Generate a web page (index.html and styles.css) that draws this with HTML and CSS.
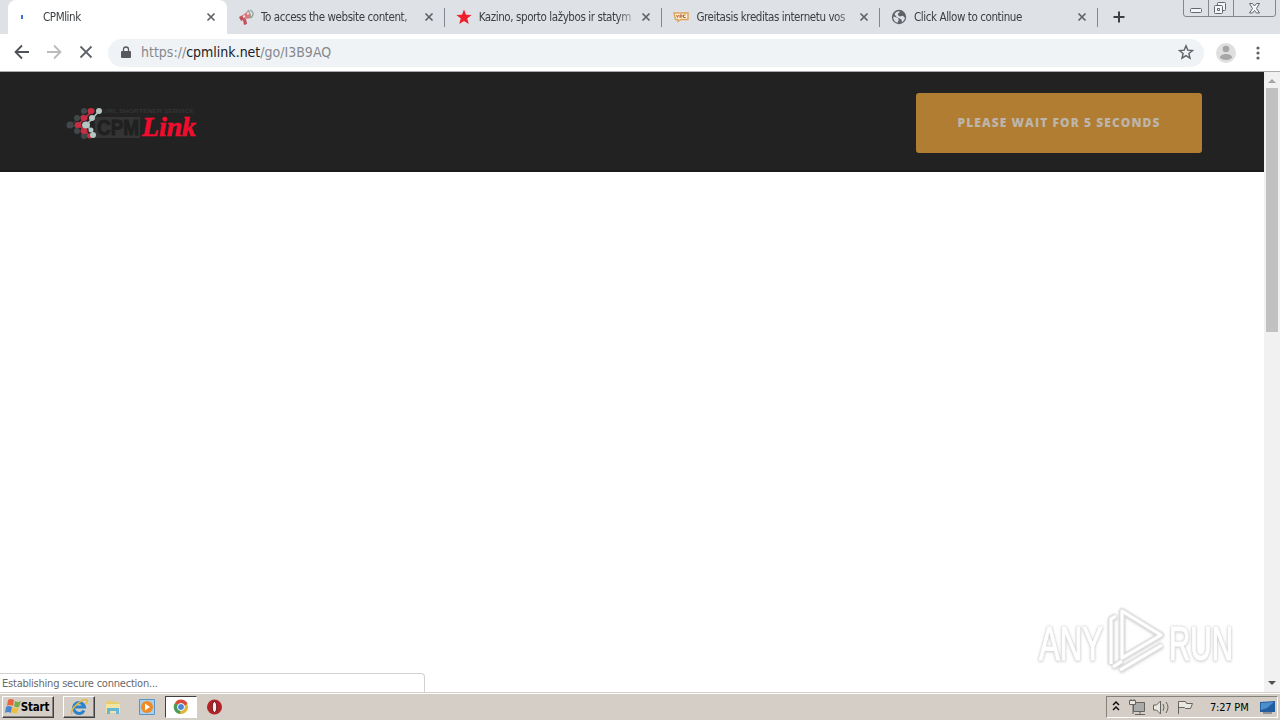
FILE: index.html
```html
<!DOCTYPE html>
<html lang="en">
<head>
    <meta charset="UTF-8">
    <meta name="viewport" content="width=device-width, initial-scale=1.0">
    <title>CPMlink</title>
    <link rel="stylesheet" href="styles.css">
</head>
<body>
    <div class="screen">
        <div class="tabs">
            <div class="tab active">
                <svg class="favicon" viewBox="0 0 16 16"><path d="M7 6h2v4H7z" fill="#3b6fd8"/></svg>
                <span class="tab-title">CPMlink</span>
                <svg class="close" viewBox="0 0 10 10"><path d="M1.5 1.5l7 7M8.5 1.5l-7 7"/></svg>
            </div>
            <div class="tab">
                <svg class="favicon" viewBox="0 0 16 16">
                    <path d="M5 6l6-5 3 8-8 1z" fill="#d9777c"/>
                    <path d="M1 8l4-2 2 4-4 2zM5 11l3-1 1 5-3 1z" fill="#c04f58"/>
                    <path d="M10 1l3 8M12 1c3 1 4 4 2 7" fill="none" stroke="#8ba69c" stroke-width="1.3"/>
                    <path d="M5 8l2-1M9 5l2-1" stroke="#f4dce0" stroke-width="2"/>
                </svg>
                <span class="tab-title">To access the website content,</span>
                <svg class="close" viewBox="0 0 10 10"><path d="M1.5 1.5l7 7M8.5 1.5l-7 7"/></svg>
            </div>
            <div class="tab">
                <svg class="favicon" viewBox="0 0 16 16"><path d="M8 .5l2 5.3 5.6.2-4.4 3.5 1.6 5.5L8 11.9 3.2 15l1.6-5.5L.4 6 6 5.8z" fill="#ef1f2d"/></svg>
                <span class="tab-title">Kazino, sporto lažybos ir statym</span>
                <svg class="close" viewBox="0 0 10 10"><path d="M1.5 1.5l7 7M8.5 1.5l-7 7"/></svg>
            </div>
            <div class="tab">
                <svg class="favicon" viewBox="0 0 16 16"><path d="M1 4h14v6.5H8l-3 2v-2H2.500z" fill="#fff0d9" stroke="#dfa35b" stroke-width="1.4"/><path d="M3.500 6l1 2.500 1-2.500M7 9V6h2v2H7M12.500 6h-2v2.500h2V8" fill="none" stroke="#b9652f"/></svg>
                <span class="tab-title">Greitasis kreditas internetu vos</span>
                <svg class="close" viewBox="0 0 10 10"><path d="M1.5 1.5l7 7M8.5 1.5l-7 7"/></svg>
            </div>
            <div class="tab">
                <svg class="favicon" viewBox="0 0 16 16"><circle cx="8" cy="8" r="7.2" fill="#5f6368"/><path d="M2.3 7.5l4.5 1.2 1 2-1.3 3.1C3.7 13 2 10.8 2.3 7.5zM8 2.2l1 .8-2 1.5v1.7L9 7.5l2.800-.7 2.100 2c-.2 2-1.300 3.500-3 4.400l-.4-2.700-2-1L5 7.500 3.500 5C4.500 3.300 6 2.300 8 2.200z" fill="#dee1e6"/></svg>
                <span class="tab-title">Click Allow to continue</span>
                <svg class="close" viewBox="0 0 10 10"><path d="M1.5 1.5l7 7M8.5 1.5l-7 7"/></svg>
            </div>
            <svg class="new-tab" viewBox="0 0 12 12"><path d="M6 .5v11M.5 6h11" stroke="#3c4043" stroke-width="2"/></svg>
            <svg class="window-buttons" viewBox="0 0 94 18">
                <path d="M.5 0v14q0 2.500 2.500 2.500h87q2.500 0 2.500-2.500V0M25.500 0v16M50.500 0v16" fill="none" stroke="#84888d"/>
                <g fill="#f5f6f8" stroke="#63676e"><rect x="7.5" y="8.5" width="11" height="4" rx="1"/><rect x="34.5" y="2.5" width="8" height="8" rx="1"/><rect x="31.5" y="5.5" width="8" height="8" rx="1"/><path d="M34.500 8.500h2v2h-2zM66.500 3.500h3l2 2.500 2-2.500h3L73.500 8.500l3 4.500h-3l-2-2.500-2 2.500h-3l3-4.500z"/></g>
            </svg>
        </div>

        <div class="toolbar">
            <svg class="nav-icons" viewBox="0 0 108 38" fill="none" stroke-width="1.8">
                <path d="M30 18H17M23 11.5L16.5 18l6.5 6.5" stroke="#4f5357"/><path d="M48 18h13M55 11.5l6.5 6.5-6.5 6.5" stroke="#b9bbbd"/><path d="M81.5 12.5l11 11M92.500 12.500l-11 11" stroke="#5f6368"/>
            </svg>
            <div class="address">
                <svg class="lock" viewBox="0 0 10 13"><path d="M1 5h8q1 0 1 1v5q0 1-1 1H1q-1 0-1-1V6q0-1 1-1z" fill="#55595e"/><path d="M2.5 5V3.5a2.5 2.5 0 015 0V5" fill="none" stroke="#55595e" stroke-width="1.3"/></svg>
                <span class="url">https://<b>cpmlink.net</b>/go/I3B9AQ</span>
                <svg class="bookmark" viewBox="0 0 16 16"><path d="M8 1.8l1.8 4.3 4.7.4-3.6 3 1.1 4.7L8 11.7l-4 2.5 1.1-4.7-3.6-3 4.7-.4z" fill="none" stroke="#5f6368" stroke-width="1.4"/></svg>
            </div>
            <svg class="profile" viewBox="0 0 20 20"><circle cx="10" cy="10" r="10" fill="#dfdfdf"/><circle cx="10" cy="6" r="3.3" fill="#a6a6a6"/><ellipse cx="10" cy="14" rx="6" ry="3" fill="#a6a6a6"/></svg>
            <svg class="more" viewBox="0 0 4 16" fill="#5f6368"><circle cx="2" cy="3" r="1.6"/><circle cx="2" cy="8" r="1.6"/><circle cx="2" cy="13" r="1.6"/></svg>
        </div>

        <div class="viewport">
            <div class="page">
                <div class="header">
                    <svg class="logo" viewBox="0 0 136 36">
                        <g fill="#41484a"><circle cx="19" cy="4" r="3"/><circle cx="12" cy="11" r="3"/><circle cx="5" cy="18" r="3.5"/><circle cx="12" cy="24" r="3"/><circle cx="19" cy="29" r="3"/></g>
                        <g fill="#c82d43"><ellipse cx="26" cy="4" rx="3.5" ry="3"/><ellipse cx="19" cy="11" rx="3.5" ry="3"/><ellipse cx="13" cy="18" rx="3.5" ry="3"/><ellipse cx="19" cy="24" rx="3.5" ry="3"/><ellipse cx="25" cy="29" rx="3" ry="2.5"/></g>
                        <path d="M21 4l-6 6M14 11l-7 6M8 18l7 7" stroke="#41484a"/>
                        <path d="M27 4l-6 6M20 11l-6 6M14 18l6 6 5 5" stroke="#c82d43" stroke-width="1.5"/>
                        <path d="M34 4l-6 7-7 7 6 6" stroke="#b5c5c2" stroke-width="1.5" fill="none"/>
                        <path d="M30 10h45v21H30z" fill="#343434"/>
                        <g fill="#b5c5c2"><ellipse cx="34" cy="4" rx="3" ry="3"/><circle cx="27" cy="11" r="3"/><ellipse cx="21" cy="18" rx="4" ry="3.5"/><circle cx="26" cy="23" r="2.5"/><ellipse cx="28" cy="28" rx="3" ry="3"/></g>
                        <text class="logo-small" x="38" y="6" textLength="91" lengthAdjust="spacingAndGlyphs">URL SHORTENER SERVICE</text>
                        <text class="logo-cpm" x="32" y="28" textLength="42" lengthAdjust="spacingAndGlyphs">CPM</text>
                        <text class="logo-link" x="77" y="29" textLength="54" lengthAdjust="spacingAndGlyphs">Link</text>
                    </svg>
                    <button class="wait">PLEASE WAIT FOR 5 SECONDS</button>
                </div>
            </div>
            <div class="scrollbar">
                <svg viewBox="0 0 16 16"><path d="M4 11l4-4 4 4z" fill="#a3a3a3"/></svg>
                <div class="thumb"></div>
                <svg class="down" viewBox="0 0 16 16"><path d="M4 5l4 4 4-4z" fill="#505050"/></svg>
            </div>
            <div class="status"><span>Establishing secure connection...</span></div>
            <svg class="watermark" viewBox="0 0 250 76">
                <g fill="#fff" stroke="#fff" stroke-width="1.2">
                    <text x="9" y="53" textLength="64" lengthAdjust="spacingAndGlyphs">ANY</text>
                    <text x="139" y="53" textLength="64" lengthAdjust="spacingAndGlyphs">RUN</text>
                </g>
                <g fill="none" stroke-linejoin="round" stroke="#e2e2e2" stroke-width="5">
                    <path d="M86 9l-5 3v45M92 4l39 24-39 23zM83 60l9-6M90 63l42-25"/>
                    <path d="M86 9l-5 3v45M92 4l39 24-39 23zM83 60l9-6M90 63l42-25" stroke="#fff" stroke-width="3"/>
                </g>
            </svg>
        </div>

        <div class="taskbar">
            <div class="start">
                <svg viewBox="0 0 16 16"><path d="M3 1q3-2 6 0L8 7Q5 5 2 7z" fill="#e6653c"/><path d="M10 2q3 2 6 0l-2 6q-3 1-5-1z" fill="#79ad4b"/><path d="M1 8q3-2 6 0l-1 6q-3-2-6 0z" fill="#4b86cc"/><path d="M8 8q3 2 6 0l-2 6q-3 1-6-1z" fill="#eebf3e"/></svg>
                <span>Start</span>
            </div>
            <div class="task raised"><svg viewBox="0 0 20 20"><path d="M15 13.5A5.5 5.5 0 1115.500 10H6" fill="none" stroke="#2c83cc" stroke-width="3"/><path d="M3 17C0 13 14 0 18 3q1 1-1 4" fill="none" stroke="#e3ba3a" stroke-width="1.5"/></svg></div>
            <div class="task"><svg viewBox="0 0 20 20"><path d="M3 5l6-2 1 2h6v4H3z" fill="#e8cc70"/><path d="M3 7h14v9H3z" fill="#f3e4a4"/><path d="M4 17v-6h12v6h-3v-3H7v3z" fill="#65b7d7"/></svg></div>
            <div class="task"><svg viewBox="0 0 20 20"><path d="M2.5 2.5h15v15h-15z" fill="#a9cfec" stroke="#5794c8"/><circle cx="10" cy="10" r="6" fill="#ee8b22"/><path d="M8 6.500l5 3.500-5 3.500z" fill="#fff"/></svg></div>
            <div class="task current"><svg viewBox="0 0 20 20"><circle cx="10" cy="10" r="7" fill="#e2b532"/><path d="M10 10L4 6a7 7 0 0112.500 1z" fill="#d84c3d"/><path d="M10 10L4 6a7 7 0 005 11z" fill="#4a9d59"/><circle cx="10" cy="10" r="3.5" fill="#4d83d9" stroke="#fff"/></svg></div>
            <div class="task"><svg viewBox="0 0 20 20"><circle cx="9.5" cy="10" r="7.5" fill="#b42226"/><ellipse cx="9.5" cy="10" rx="2.3" ry="5.5" fill="#f8eeee" stroke="#651215"/></svg></div>
            <div class="tray">
                <svg viewBox="0 0 98 20" class="tray-icons">
                    <path d="M6 8l3-3 3 3M6 13l3-3 3 3" fill="none" stroke="#111" stroke-width="1.5"/>
                    <g fill="#e9e7e2" stroke="#66635f"><path d="M26.500 5.500h11v9h-11z" fill="#aaa"/><path d="M28 17.500h10M33 15v2M26 8v9"/><path d="M22.500 3.500h6v4h-6zM24 2v2M27 2v2"/><path d="M46.500 8h3l4-4v13l-4-4h-3z"/><path d="M56 7q2 3 0 7M59 5q4 5 0 11" fill="none"/><path d="M71.500 17V4.500h7l1 2h6l-2 5h-5l-1-1h-6"/></g>
                </svg>
                <span>7:27 PM</span>
                <svg class="desktop" viewBox="0 0 18 16"><path d="M1 3l15-1v11H1z" fill="#235e9f"/><path d="M2 4l13-1-7 6-6 2z" fill="#4b8fce"/><path d="M4 14h9" stroke="#4b5564"/></svg>
            </div>
        </div>
    </div>
</body>
</html>
```
FILE: styles.css
```css
* {
    box-sizing: border-box;
}
body {
    margin: 0;
    background-color: #fff;
    font-family: "DejaVu Sans Condensed", "DejaVu Sans", sans-serif;
    font-size: 11px;
}
svg {
    display: block;
    flex: none;
}
.screen {
    display: flex;
    flex-direction: column;
    width: 1280px;
    height: 720px;
    overflow: hidden;
}
.tabs {
    display: flex;
    height: 34px;
    padding-left: 8px;
    background-color: #dee1e6;
    position: relative;
}
.tab {
    display: flex;
    align-items: center;
    width: 217.7px;
    height: 34px;
    padding: 0 11px;
    background: linear-gradient(#83878d, #83878d) right 8px / 1px 19px no-repeat;
}
.tab.active {
    width: 219px;
    padding: 0 11px 0 6px;
    border-radius: 8px 8px 0 0;
    background: #fff;
}
.favicon {
    width: 16px;
    height: 16px;
    margin-right: 7px;
}
.active .favicon {
    margin-right: 13px;
}
.tab-title {
    flex: 1;
    white-space: nowrap;
    color: #3c4043;
    font-size: 11.5px;
    letter-spacing: -0.42px;
    mask-image: linear-gradient(90deg, #000 90%, rgba(0, 0, 0, 0.3));
}
.close {
    width: 10px;
    height: 10px;
    margin-left: 8px;
    fill: none;
    stroke: #5f6368;
    stroke-width: 1.7;
}
.new-tab {
    width: 12px;
    height: 12px;
    margin: 11px 0 0 15px;
}
.window-buttons {
    position: absolute;
    right: 3px;
    top: 0;
    width: 94px;
    height: 18px;
}
.toolbar {
    display: flex;
    align-items: center;
    height: 38px;
    border-bottom: 1px solid #a9abae;
}
.nav-icons {
    width: 108px;
    height: 38px;
    margin-left: -1px;
}
.address {
    display: flex;
    align-items: center;
    width: 1096px;
    height: 28px;
    margin-left: 1px;
    padding: 0 10px 1px 13px;
    border-radius: 14px;
    background-color: #f0f3f6;
}
.lock {
    width: 10px;
    height: 13px;
    margin-right: 10px;
}
.url {
    flex: 1;
    color: #85898d;
    font-size: 14px;
    padding-bottom: 1px;
}
.url b {
    color: #202124;
    font-weight: normal;
}
.bookmark {
    width: 16px;
    height: 16px;
}
.profile {
    width: 20px;
    height: 20px;
    margin-left: 12px;
}
.more {
    width: 4px;
    height: 16px;
    margin-left: 20px;
}
.viewport {
    display: flex;
    height: 620px;
    position: relative;
}
.page {
    width: 1264px;
    background-color: #fff;
}
.header {
    display: flex;
    justify-content: space-between;
    align-items: flex-start;
    height: 100px;
    padding: 21px 62px 0 65px;
    background-color: #222;
    border-bottom: 2px solid #1a1a1a;
}
.logo {
    width: 136px;
    height: 36px;
    margin-top: 14px;
}
.logo-small {
    font: bold 6px "Liberation Sans", sans-serif;
    fill: #343434;
}
.logo-cpm {
    font: bold 22px "Liberation Sans", sans-serif;
    fill: #202020;
    stroke: #202020;
}
.logo-link {
    font: italic bold 27px "Liberation Serif", serif;
    fill: #f00d2d;
    stroke: #f00d2d;
    stroke-width: 0.6px;
}
.wait {
    width: 286px;
    height: 60px;
    padding: 0 0 2px;
    border: none;
    border-radius: 3px;
    background-color: #b07d33;
    color: #bdb5aa;
    font: 800 12px "Open Sans", sans-serif;
    letter-spacing: 1.07px;
}
.scrollbar {
    display: flex;
    flex-direction: column;
    width: 16px;
    background-color: #f1f1f1;
}
.scrollbar svg {
    width: 16px;
    height: 16px;
}
.thumb {
    width: 12px;
    height: 244px;
    margin-left: 2px;
    background-color: #c1c1c1;
}
.scrollbar .down {
    margin-top: auto;
}
.status {
    position: absolute;
    left: 0;
    bottom: 0;
    width: 425px;
    height: 19px;
    padding: 3px 2px;
    border: 1px solid #d2d2d2;
    border-width: 1px 1px 0 0;
    border-radius: 0 4px 0 0;
    background-color: #fff;
    color: #696969;
    line-height: 13px;
    letter-spacing: -0.22px;
}
.watermark {
    position: absolute;
    left: 1030px;
    top: 535px;
    width: 250px;
    height: 76px;
    font: 48px "Liberation Sans", sans-serif;
    filter: drop-shadow(0 0 1px #ccc) drop-shadow(0 1px 1px #ddd);
}
.taskbar {
    display: flex;
    height: 28px;
    padding: 3px 2px 2px;
    border-top: 1px solid #d4d0c8;
    background-color: #d4cec6;
    box-shadow: inset 0 1px #fff;
}
.start, .task {
    display: flex;
    align-items: center;
    justify-content: center;
    height: 22px;
}
.start, .raised {
    border: 1px solid #fff;
    border-right-color: #404040;
    border-bottom-color: #404040;
    box-shadow: inset -1px -1px #87837d;
}
.start {
    width: 52px;
    margin-right: 9px;
    padding-right: 2px;
    font-weight: bold;
    font-size: 11.5px;
    letter-spacing: -0.2px;
}
.start svg {
    width: 16px;
    height: 16px;
}
.task {
    width: 32px;
    margin-right: 2px;
}
.task svg {
    width: 20px;
    height: 20px;
}
.current {
    border: 1px solid #404040;
    border-right-color: #fff;
    border-bottom-color: #fff;
    background-color: #fff;
}
.tray {
    display: flex;
    align-items: center;
    width: 172px;
    height: 22px;
    margin-left: auto;
    border: 1px solid #85817b;
    border-right-color: #fff;
    border-bottom-color: #fff;
}
.tray-icons {
    width: 98px;
    height: 20px;
}
.tray span {
    width: 44px;
    margin-left: 5px;
    white-space: nowrap;
    letter-spacing: -0.2px;
}
.desktop {
    width: 18px;
    height: 16px;
    margin-left: 5px;
}
```
